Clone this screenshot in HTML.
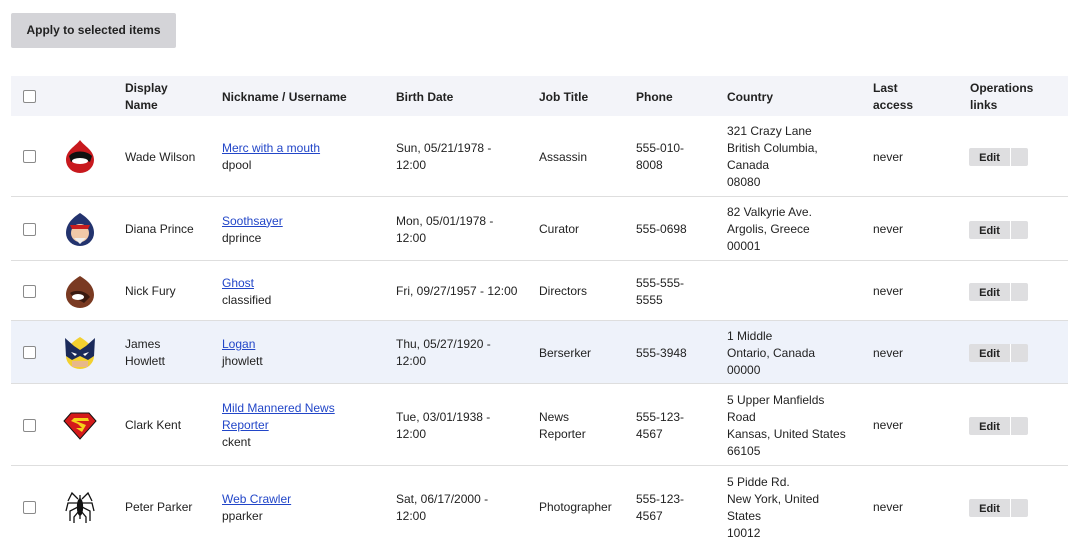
<!DOCTYPE html>
<html><head><meta charset="utf-8"><style>
*{margin:0;padding:0;box-sizing:border-box}
body{width:1080px;height:547px;overflow:hidden;background:#fff;font-family:"Liberation Sans","DejaVu Sans",sans-serif;font-size:12px;color:#222;position:relative}
.btn{position:absolute;left:11px;top:13px;width:165px;height:35px;background:#d4d4d8;border-radius:2px;font-weight:bold;font-size:12px;line-height:35px;text-align:center;color:#222}
.row{position:absolute;left:11px;width:1057px;border-bottom:1px solid #dedede}
.hdr{background:#f3f4f9;border-bottom:none;font-weight:bold}
.c{position:absolute;top:0;height:100%;display:flex;align-items:center;line-height:17px;white-space:nowrap;padding-top:2px}
.cb{position:absolute;left:12px;width:13px;height:13px;border:1px solid #8a8a8a;border-radius:2px;background:#fff;top:50%;margin-top:-6px}
a{color:#2246c8;text-decoration:underline}
.edit{position:absolute;left:958px;top:50%;margin-top:-8px;width:59px;height:18px;background:#dedee0;border-radius:2px;font-size:10px;font-weight:bold}
.edit span{position:absolute;left:0;top:1px;width:41px;text-align:center;line-height:18px;font-size:11px}
.edit i{position:absolute;left:41px;top:0;width:1px;height:18px;background:#fff}
.av{position:absolute;left:51px;top:50%;margin-top:-18px;width:36px;height:36px}
</style></head><body>
<div class="btn">Apply to selected items</div>

<div class="row hdr" style="top:76px;height:40px">
<div class="cb"></div>
<div class="c" style="left:114px">Display<br>Name</div>
<div class="c" style="left:211px">Nickname / Username</div>
<div class="c" style="left:385px">Birth Date</div>
<div class="c" style="left:528px">Job Title</div>
<div class="c" style="left:625px">Phone</div>
<div class="c" style="left:716px">Country</div>
<div class="c" style="left:862px">Last<br>access</div>
<div class="c" style="left:959px">Operations<br>links</div>
</div>

<div class="row" style="top:116px;height:81px">
<div class="cb"></div>
<svg class="av" viewBox="0 0 36 36"><path d="M18 2 C22 8 32 12 32 22 A14 13 0 0 1 4 22 C4 12 14 8 18 2Z" fill="#c8191e"/><path d="M7 18 C12 12 24 12 30 18 L28 24 C22 20 14 20 9 24Z" fill="#111"/><ellipse cx="18" cy="23" rx="8" ry="3" fill="#fff"/></svg>
<div class="c" style="left:114px">Wade Wilson</div>
<div class="c" style="left:211px"><div><a>Merc with a mouth</a><br>dpool</div></div>
<div class="c" style="left:385px">Sun, 05/21/1978 -<br>12:00</div>
<div class="c" style="left:528px">Assassin</div>
<div class="c" style="left:625px">555-010-<br>8008</div>
<div class="c" style="left:716px">321 Crazy Lane<br>British Columbia,<br>Canada<br>08080</div>
<div class="c" style="left:862px">never</div>
<div class="edit"><span>Edit</span><i></i></div>
</div>

<div class="row" style="top:197px;height:64px">
<div class="cb"></div>
<svg class="av" viewBox="0 0 36 36"><path d="M18 2 C24 6 32 12 32 22 A14 13 0 0 1 4 22 C4 12 12 6 18 2Z" fill="#23336e"/><ellipse cx="18" cy="22" rx="9" ry="9" fill="#f0c8a8"/><path d="M8 14 L28 14 L26 18 L10 18Z" fill="#c81e1e"/><path d="M12 27 L24 27 L18 33Z" fill="#eee"/></svg>
<div class="c" style="left:114px">Diana Prince</div>
<div class="c" style="left:211px"><div><a>Soothsayer</a><br>dprince</div></div>
<div class="c" style="left:385px">Mon, 05/01/1978 -<br>12:00</div>
<div class="c" style="left:528px">Curator</div>
<div class="c" style="left:625px">555-0698</div>
<div class="c" style="left:716px">82 Valkyrie Ave.<br>Argolis, Greece<br>00001</div>
<div class="c" style="left:862px">never</div>
<div class="edit"><span>Edit</span><i></i></div>
</div>

<div class="row" style="top:261px;height:60px">
<div class="cb"></div>
<svg class="av" viewBox="0 0 36 36"><path d="M18 3 C24 7 32 12 32 22 A14 13 0 0 1 4 22 C4 12 12 7 18 3Z" fill="#7a3a22"/><path d="M8 20 C14 16 24 18 28 24 L22 30 C16 26 12 26 8 20Z" fill="#3a1a10"/><ellipse cx="16" cy="24" rx="6" ry="3" fill="#fff"/></svg>
<div class="c" style="left:114px">Nick Fury</div>
<div class="c" style="left:211px"><div><a>Ghost</a><br>classified</div></div>
<div class="c" style="left:385px">Fri, 09/27/1957 - 12:00</div>
<div class="c" style="left:528px">Directors</div>
<div class="c" style="left:625px">555-555-<br>5555</div>
<div class="c" style="left:862px">never</div>
<div class="edit"><span>Edit</span><i></i></div>
</div>

<div class="row" style="top:321px;height:63px;background:#eef2fa">
<div class="cb"></div>
<svg class="av" viewBox="0 0 36 36"><path d="M18 3 C24 7 32 12 32 22 A14 13 0 0 1 4 22 C4 12 12 7 18 3Z" fill="#f2d030"/><path d="M3 4 L12 12 L18 16 L24 12 L33 4 L32 22 L26 26 L18 22 L10 26 L4 22Z" fill="#1a2a5a"/><path d="M9 18 L15 20 L13 22Z M27 18 L21 20 L23 22Z" fill="#fff"/><rect x="10" y="27" width="16" height="6" fill="#e8b88a"/></svg>
<div class="c" style="left:114px">James<br>Howlett</div>
<div class="c" style="left:211px"><div><a>Logan</a><br>jhowlett</div></div>
<div class="c" style="left:385px">Thu, 05/27/1920 -<br>12:00</div>
<div class="c" style="left:528px">Berserker</div>
<div class="c" style="left:625px">555-3948</div>
<div class="c" style="left:716px">1 Middle<br>Ontario, Canada<br>00000</div>
<div class="c" style="left:862px">never</div>
<div class="edit"><span>Edit</span><i></i></div>
</div>

<div class="row" style="top:384px;height:82px">
<div class="cb"></div>
<svg class="av" viewBox="0 0 36 36"><path d="M9 6 L27 6 L34 14 L18 32 L2 14Z" fill="#d41a1a" stroke="#111" stroke-width="1"/><path d="M12 11 L26 11 L27 14 L14 14 L24 18 L20 25 L14 21 L20 21 L16 17 L9 14Z" fill="#f5d21a"/></svg>
<div class="c" style="left:114px">Clark Kent</div>
<div class="c" style="left:211px"><div><a>Mild Mannered News<br>Reporter</a><br>ckent</div></div>
<div class="c" style="left:385px">Tue, 03/01/1938 -<br>12:00</div>
<div class="c" style="left:528px">News<br>Reporter</div>
<div class="c" style="left:625px">555-123-<br>4567</div>
<div class="c" style="left:716px">5 Upper Manfields<br>Road<br>Kansas, United States<br>66105</div>
<div class="c" style="left:862px">never</div>
<div class="edit"><span>Edit</span><i></i></div>
</div>

<div class="row" style="top:466px;height:81px;border-bottom:none">
<div class="cb"></div>
<svg class="av" viewBox="0 0 36 36" fill="none" stroke="#111" stroke-width="1.3"><path d="M18 6 L18 30"/><path d="M16 10 L10 4 L6 12 M20 10 L26 4 L30 12 M16 14 L6 14 L4 22 M20 14 L30 14 L32 22 M16 18 L8 22 L8 32 M20 18 L28 22 L28 32 M17 22 L12 28 L12 34 M19 22 L24 28 L24 34"/><ellipse cx="18" cy="18" rx="2.5" ry="8" fill="#111"/></svg>
<div class="c" style="left:114px">Peter Parker</div>
<div class="c" style="left:211px"><div><a>Web Crawler</a><br>pparker</div></div>
<div class="c" style="left:385px">Sat, 06/17/2000 -<br>12:00</div>
<div class="c" style="left:528px">Photographer</div>
<div class="c" style="left:625px">555-123-<br>4567</div>
<div class="c" style="left:716px">5 Pidde Rd.<br>New York, United<br>States<br>10012</div>
<div class="c" style="left:862px">never</div>
<div class="edit"><span>Edit</span><i></i></div>
</div>
</body></html>
